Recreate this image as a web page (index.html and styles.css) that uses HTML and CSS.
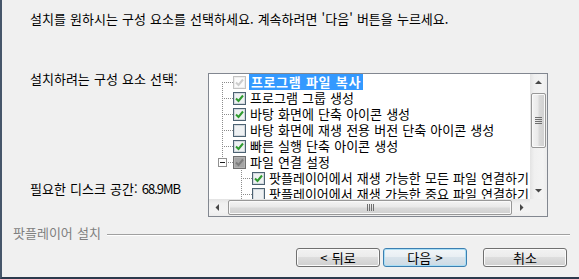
FILE: index.html
```html
<!DOCTYPE html>
<html lang="ko">
<head>
<meta charset="utf-8">
<title>팟플레이어 설치</title>
<link rel="stylesheet" href="styles.css">
</head>
<body>
<div class="dialog">
  <p class="intro">설치를 원하시는 구성 요소를 선택하세요. 계속하려면 '다음' 버튼을 누르세요.</p>
  <div class="main">
    <div class="side">
      <p class="label">설치하려는 구성 요소 선택:</p>
      <p class="label">필요한 디스크 공간: <span class="num">68.9MB</span></p>
    </div>
    <div class="tree">
      <ul class="items">
        <li class="row">
          <svg class="gut" width="24" height="16"><path d="M13.5 8v8M15 8.5h9"/></svg>
          <svg class="cb dis" width="13" height="13" viewBox="0 0 13 13"><rect class="o" x="0.5" y="0.5" width="12" height="12"/><rect class="i" x="1.5" y="1.5" width="10" height="10"/><path class="k" d="M3 6.5l2.5 2.5l4.5-5.5"/></svg>
          <span class="txt sel">프로그램 파일 복사</span>
        </li>
        <li class="row">
          <svg class="gut" width="24" height="16"><path d="M13.5 0v16M15 8.5h9"/></svg>
          <svg class="cb" width="13" height="13" viewBox="0 0 13 13"><rect class="o" x="0.5" y="0.5" width="12" height="12"/><rect class="i" x="1.5" y="1.5" width="10" height="10"/><path class="k" d="M3 6.5l2.5 2.5l4.5-5.5"/></svg>
          <span class="txt">프로그램 그룹 생성</span>
        </li>
        <li class="row">
          <svg class="gut" width="24" height="16"><path d="M13.5 0v16M15 8.5h9"/></svg>
          <svg class="cb" width="13" height="13" viewBox="0 0 13 13"><rect class="o" x="0.5" y="0.5" width="12" height="12"/><rect class="i" x="1.5" y="1.5" width="10" height="10"/><path class="k" d="M3 6.5l2.5 2.5l4.5-5.5"/></svg>
          <span class="txt">바탕 화면에 단축 아이콘 생성</span>
        </li>
        <li class="row">
          <svg class="gut" width="24" height="16"><path d="M13.5 0v16M15 8.5h9"/></svg>
          <svg class="cb" width="13" height="13" viewBox="0 0 13 13"><rect class="o" x="0.5" y="0.5" width="12" height="12"/><rect class="i" x="1.5" y="1.5" width="10" height="10"/></svg>
          <span class="txt">바탕 화면에 재생 전용 버전 단축 아이콘 생성</span>
        </li>
        <li class="row">
          <svg class="gut" width="24" height="16"><path d="M13.5 0v16M15 8.5h9"/></svg>
          <svg class="cb" width="13" height="13" viewBox="0 0 13 13"><rect class="o" x="0.5" y="0.5" width="12" height="12"/><rect class="i" x="1.5" y="1.5" width="10" height="10"/><path class="k" d="M3 6.5l2.5 2.5l4.5-5.5"/></svg>
          <span class="txt">빠른 실행 단축 아이콘 생성</span>
        </li>
        <li class="row">
          <svg class="gut" width="24" height="16"><path d="M13.5 0v4M19 8.5h5"/><rect class="exp" x="9.5" y="4.5" width="8" height="8"/><path class="minus" d="M11 8.5h5"/></svg>
          <svg class="cb mix" width="13" height="13" viewBox="0 0 13 13"><rect class="o" x="0.5" y="0.5" width="12" height="12"/><rect class="i" x="1.5" y="1.5" width="10" height="10"/><path class="k" d="M3 6.5l2.5 2.5l4.5-5.5"/></svg>
          <span class="txt">파일 연결 설정</span>
        </li>
        <li class="row">
          <svg class="gut" width="43" height="16"><path d="M32.5 0v16M34 8.5h9"/></svg>
          <svg class="cb" width="13" height="13" viewBox="0 0 13 13"><rect class="o" x="0.5" y="0.5" width="12" height="12"/><rect class="i" x="1.5" y="1.5" width="10" height="10"/><path class="k" d="M3 6.5l2.5 2.5l4.5-5.5"/></svg>
          <span class="txt">팟플레이어에서 재생 가능한 모든 파일 연결하기</span>
        </li>
        <li class="row">
          <svg class="gut" width="43" height="16"><path d="M32.5 0v16M34 8.5h9"/></svg>
          <svg class="cb" width="13" height="13" viewBox="0 0 13 13"><rect class="o" x="0.5" y="0.5" width="12" height="12"/><rect class="i" x="1.5" y="1.5" width="10" height="10"/></svg>
          <span class="txt">팟플레이어에서 재생 가능한 중요 파일 연결하기</span>
        </li>
      </ul>
      <div class="vscroll">
        <svg class="arrow" viewBox="0 0 17 17"><polygon points="5,10 12,10 8.5,6.5"/></svg>
        <div class="vtrack">
          <div class="vthumb"><svg class="grip" width="7" height="7"><path d="M0 0.5h7M0 2.5h7M0 4.5h7M0 6.5h7"/></svg></div>
        </div>
        <svg class="arrow" viewBox="0 0 17 17"><polygon points="5,7 12,7 8.5,10.5"/></svg>
      </div>
      <div class="hscroll">
        <svg class="arrow" viewBox="0 0 17 17"><polygon points="10,5 10,12 6.5,8.5"/></svg>
        <div class="htrack">
          <div class="hthumb"><svg class="grip" width="7" height="7"><path d="M0.5 0v7M2.5 0v7M4.5 0v7M6.5 0v7"/></svg></div>
        </div>
        <svg class="arrow" viewBox="0 0 17 17"><polygon points="7,5 7,12 10.5,8.5"/></svg>
      </div>
      <div class="corner"></div>
    </div>
  </div>
  <div class="brand"><span>팟플레이어 설치</span><span class="rule"></span></div>
  <div class="buttons">
    <button class="btn">&lt; 뒤로</button>
    <button class="btn default">다음 &gt;</button>
    <button class="btn cancel">취소</button>
  </div>
</div>
</body>
</html>
```

FILE: styles.css
```css
* { box-sizing: border-box; }
html, body { margin: 0; padding: 0; }
body {
  background: #f0f0f0;
  font-family: "Noto Sans CJK KR", sans-serif;
  font-size: 13px;
  color: #000;
}
.dialog {
  width: 579px;
  height: 279px;
  border-left: 2px solid #46566a;
  border-bottom: 2px solid #2c3a4d;
  display: flex;
  flex-direction: column;
  overflow: hidden;
}
.intro {
  margin: 0;
  padding: 11px 0 0 28px;
  line-height: 16px;
  word-spacing: 0.5px;
  white-space: nowrap;
}
.main {
  display: flex;
  margin-top: 44px;
  padding-left: 28px;
}
.side {
  width: 178px;
  height: 146px;
  display: flex;
  flex-direction: column;
  justify-content: space-between;
  padding-bottom: 20px;
}
.label {
  margin: 0;
  line-height: 16px;
  word-spacing: 0.5px;
  white-space: nowrap;
}
.num { letter-spacing: -1px; }
.tree {
  margin-top: 2px;
  width: 340px;
  height: 144px;
  border: 1px solid #828790;
  background: #fff;
  display: grid;
  grid-template-columns: 321px 17px;
  grid-template-rows: 125px 17px;
}
.items {
  list-style: none;
  margin: 0;
  padding: 0;
  overflow: hidden;
}
.row {
  display: flex;
  align-items: center;
  height: 16px;
  white-space: nowrap;
}
.gut { flex: none; display: block; }
.gut path {
  fill: none;
  stroke: #8c8c8c;
  stroke-dasharray: 1 1;
  shape-rendering: crispEdges;
}
.gut .exp {
  fill: #fff;
  stroke: #919191;
  shape-rendering: crispEdges;
}
.gut .minus {
  stroke: #1e1e1e;
  stroke-dasharray: none;
}
.cb { flex: none; display: block; }
.cb .o { fill: #fff; stroke: #4c6272; shape-rendering: crispEdges; }
.cb .i { fill: #eef1f3; stroke: #d2d8de; shape-rendering: crispEdges; }
.cb .k { fill: none; stroke: #2f9b2f; stroke-width: 2; }
.cb.dis .o { stroke: #c3c3c3; }
.cb.dis .i { fill: #fbfbfb; stroke: #eeeeee; }
.cb.dis .k { stroke: #cdcdcd; }
.cb.mix .o { stroke: #6f6f6f; fill: #9d9d9d; }
.cb.mix .i { fill: #a4a4a4; stroke: #b3b3b3; }
.cb.mix .k { stroke: #7c7c7c; }
.txt {
  margin-left: 3px;
  padding: 0 1px;
  line-height: 16px;
  word-spacing: 0.5px;
}
.txt.sel {
  background: #3399ff;
  color: #fff;
  font-weight: bold;
  letter-spacing: 0.6px;
  padding: 0 2px 0 2px;
}
.arrow { flex: none; display: block; width: 17px; height: 17px; }
.arrow polygon { fill: #474747; }
.vscroll {
  display: flex;
  flex-direction: column;
  background: linear-gradient(to right, #e3e3e3, #f0f0f0 25%, #f3f3f3 75%, #ececec);
}
.vtrack { flex: 1; padding: 2px 1px 0; }
.vthumb {
  height: 55px;
  border: 1px solid #979797;
  border-radius: 2px;
  background: linear-gradient(to right, #f4f4f4, #e9e9e9 45%, #d9d9d9 55%, #d0d0d0);
  box-shadow: inset 0 0 0 1px #f9f9f9;
  display: flex;
  align-items: center;
  justify-content: center;
}
.hscroll {
  display: flex;
  background: linear-gradient(to bottom, #e3e3e3, #f0f0f0 25%, #f3f3f3 75%, #ececec);
}
.htrack { flex: 1; display: flex; padding: 1px 1px 1px 2px; }
.hthumb {
  flex: 1;
  border: 1px solid #979797;
  border-radius: 2px;
  background: linear-gradient(to bottom, #f4f4f4, #e9e9e9 45%, #d9d9d9 55%, #d0d0d0);
  box-shadow: inset 0 0 0 1px #f9f9f9;
  display: flex;
  align-items: center;
  justify-content: center;
}
.grip { display: block; }
.grip path { stroke: #6f6f6f; fill: none; shape-rendering: crispEdges; }
.corner { background: #f0f0f0; }
.brand {
  display: flex;
  margin-top: 8px;
  padding-left: 11px;
  height: 16px;
  line-height: 16px;
  color: #7f7f7f;
  word-spacing: 0.5px;
  white-space: nowrap;
}
.rule {
  flex: 1;
  margin: 9px 9px 0 6px;
  height: 2px;
  border-top: 1px solid #a0a0a0;
  border-bottom: 1px solid #ffffff;
}
.buttons {
  display: flex;
  margin-top: 7px;
  padding-left: 294px;
}
.btn {
  width: 84px;
  height: 19px;
  padding: 0;
  border: 1px solid #707070;
  border-radius: 3px;
  background: linear-gradient(#f2f2f2, #ebebeb 50%, #dddddd 50%, #cfcfcf);
  box-shadow: inset 0 0 0 1px #fbfbfb;
  font: 13px/17px "Noto Sans CJK KR", sans-serif;
  color: #000;
  text-align: center;
  word-spacing: 0.5px;
}
.btn + .btn { margin-left: 3px; }
.btn.cancel { margin-left: 16px; }
.btn.default {
  border-color: #3c7fb1;
  box-shadow: inset 0 0 0 1px #a9def5;
  background: linear-gradient(#f1f6f9, #e8eef3 50%, #d8e3eb 50%, #cddae4);
}
```
